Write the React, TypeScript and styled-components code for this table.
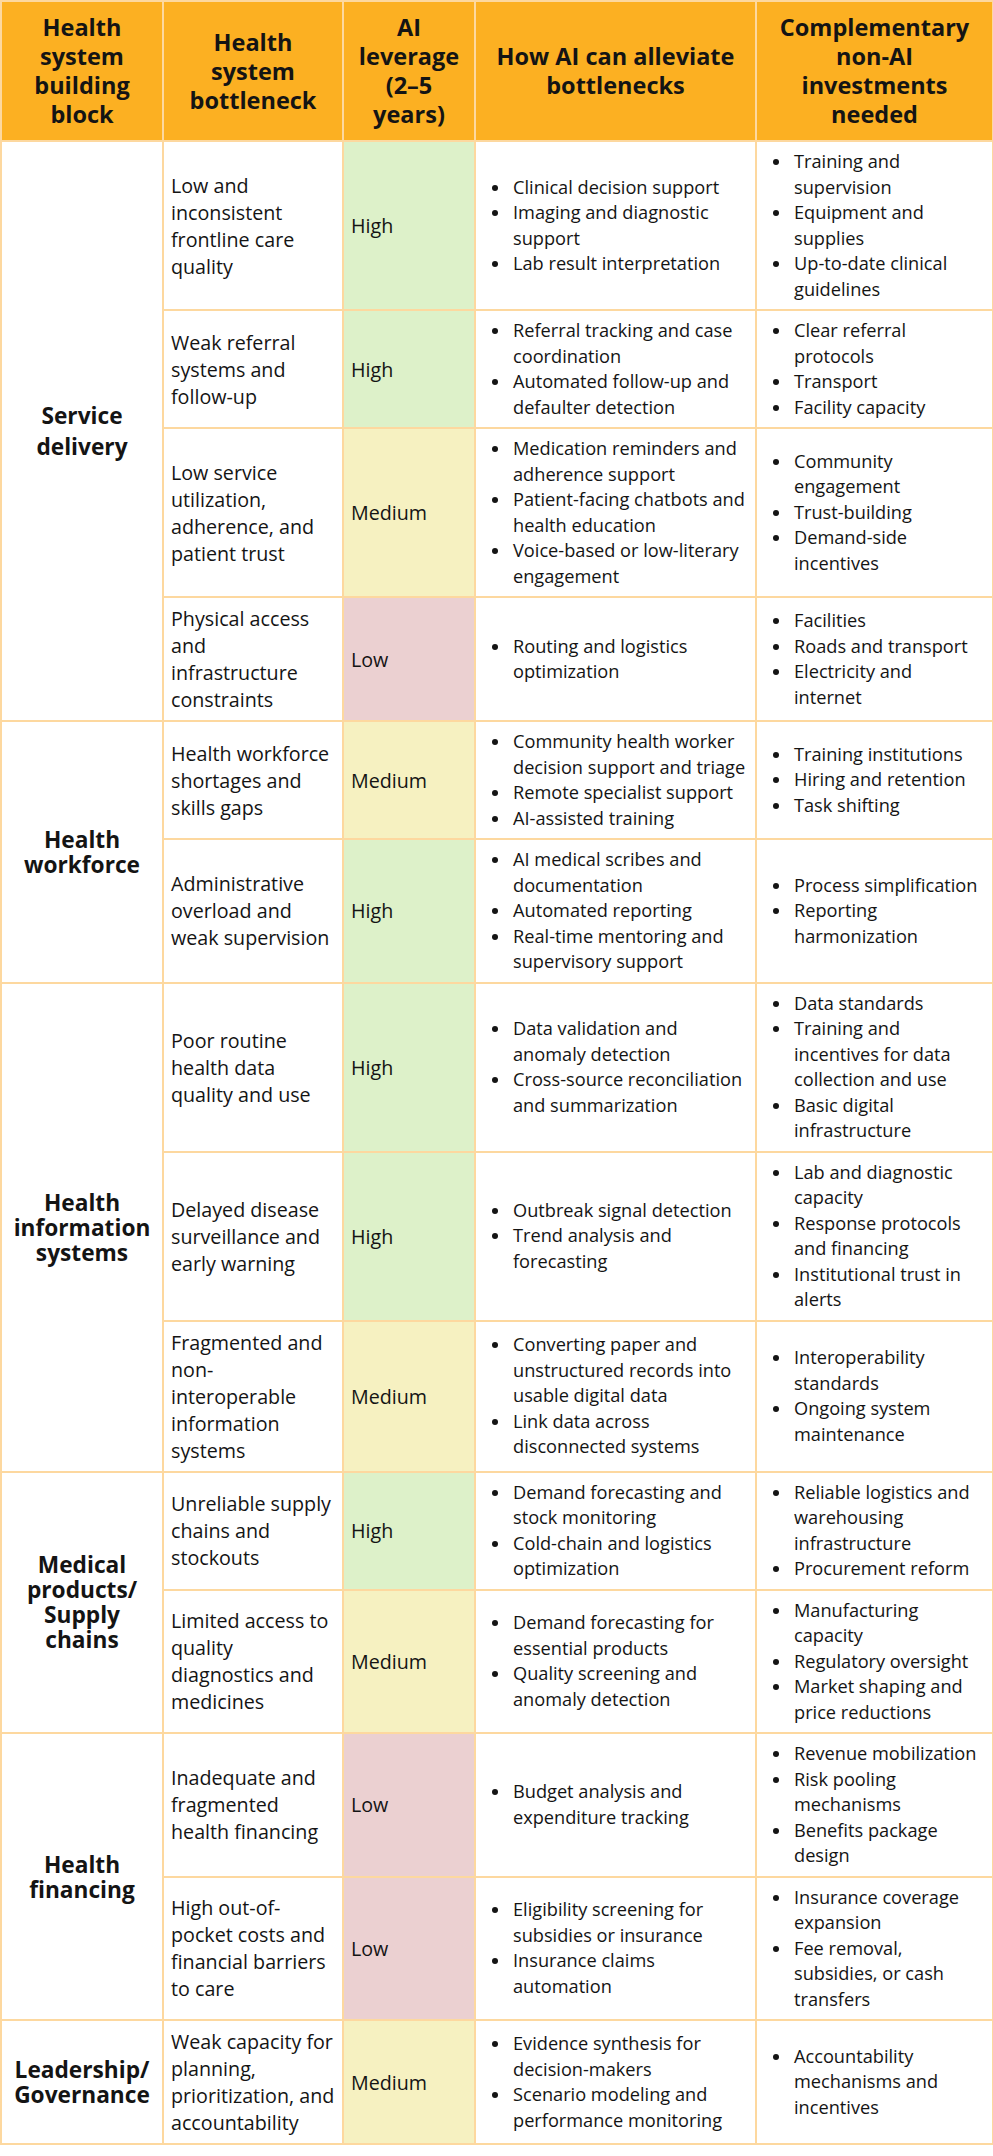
import React from 'react';
import styled, { createGlobalStyle } from 'styled-components';

type Level = 'High' | 'Medium' | 'Low';

interface IRow {
  bottleneck: string,
  level: Level,
  ai: string[],
  other: string[],
}

interface IGroup {
  name: string,
  spread?: boolean,
  rows: IRow[],
}

const COLORS = {
  header: '#fcb022',
  border: '#fdd89f',
  text: '#141414',
  High: '#ddf1c9',
  Medium: '#f6f1c1',
  Low: '#ebd0d1',
};

const GlobalStyle = createGlobalStyle`
  body {
    margin: 0;
    background: #ffffff;
    color: ${COLORS.text};
    font-family: "Open Sans", "Noto Sans", Lato, sans-serif;
  }
`;

const Table = styled.table`
  width: 992px;
  table-layout: fixed;
  border-collapse: collapse;
  border: 2px solid ${COLORS.border};
  font-size: 19.7px;
  line-height: 27px;
`;

const HeadCell = styled.th`
  background: ${COLORS.header};
  border: 2px solid ${COLORS.border};
  padding: 11px 8px;
  font-size: 23.5px;
  line-height: 29px;
  font-weight: 700;
  text-align: center;
  vertical-align: middle;
`;

const GroupCell = styled.td<{ $spread?: boolean }>`
  border: 2px solid ${COLORS.border};
  padding: 7px;
  font-size: 22.7px;
  line-height: ${(p) => (p.$spread ? '31px' : '25px')};
  font-weight: 700;
  text-align: center;
  vertical-align: middle;
`;

const TextCell = styled.td`
  border: 2px solid ${COLORS.border};
  padding: 7px;
  vertical-align: middle;
`;

const LevelCell = styled(TextCell)<{ $level: Level }>`
  background: ${(p) => COLORS[p.$level]};
`;

const ListCell = styled(TextCell)<{ $narrow?: boolean }>`
  padding-right: ${(p) => (p.$narrow ? '11px' : '7px')};
`;

const BulletList = styled.ul`
  list-style: none;
  margin: 0;
  padding: 0 0 0 30px;
  font-size: 18.2px;
  line-height: 25.5px;
`;

const Bullet = styled.li`
  position: relative;
  &::before {
    content: '';
    position: absolute;
    left: -21px;
    top: 10px;
    width: 6px;
    height: 6px;
    border-radius: 50%;
    background: ${COLORS.text};
  }
`;

const GROUPS: IGroup[] = [
  {
    name: 'Service delivery',
    spread: true,
    rows: [
      {
        bottleneck: 'Low and inconsistent frontline care quality',
        level: 'High',
        ai: ['Clinical decision support', 'Imaging and diagnostic support', 'Lab result interpretation'],
        other: ['Training and supervision', 'Equipment and supplies', 'Up-to-date clinical guidelines'],
      },
      {
        bottleneck: 'Weak referral systems and follow-up',
        level: 'High',
        ai: ['Referral tracking and case coordination', 'Automated follow-up and defaulter detection'],
        other: ['Clear referral protocols', 'Transport', 'Facility capacity'],
      },
      {
        bottleneck: 'Low service utilization, adherence, and patient trust',
        level: 'Medium',
        ai: ['Medication reminders and adherence support', 'Patient-facing chatbots and health education', 'Voice-based or low-literary engagement'],
        other: ['Community engagement', 'Trust-building', 'Demand-side incentives'],
      },
      {
        bottleneck: 'Physical access and infrastructure constraints',
        level: 'Low',
        ai: ['Routing and logistics optimization'],
        other: ['Facilities', 'Roads and transport', 'Electricity and internet'],
      },
    ],
  },
  {
    name: 'Health workforce',
    rows: [
      {
        bottleneck: 'Health workforce shortages and skills gaps',
        level: 'Medium',
        ai: ['Community health worker decision support and triage', 'Remote specialist support', 'AI-assisted training'],
        other: ['Training institutions', 'Hiring and retention', 'Task shifting'],
      },
      {
        bottleneck: 'Administrative overload and weak supervision',
        level: 'High',
        ai: ['AI medical scribes and documentation', 'Automated reporting', 'Real-time mentoring and supervisory support'],
        other: ['Process simplification', 'Reporting harmonization'],
      },
    ],
  },
  {
    name: 'Health information systems',
    rows: [
      {
        bottleneck: 'Poor routine health data quality and use',
        level: 'High',
        ai: ['Data validation and anomaly detection', 'Cross-source reconciliation and summarization'],
        other: ['Data standards', 'Training and incentives for data collection and use', 'Basic digital infrastructure'],
      },
      {
        bottleneck: 'Delayed disease surveillance and early warning',
        level: 'High',
        ai: ['Outbreak signal detection', 'Trend analysis and forecasting'],
        other: ['Lab and diagnostic capacity', 'Response protocols and financing', 'Institutional trust in alerts'],
      },
      {
        bottleneck: 'Fragmented and non-interoperable information systems',
        level: 'Medium',
        ai: ['Converting paper and unstructured records into usable digital data', 'Link data across disconnected systems'],
        other: ['Interoperability standards', 'Ongoing system maintenance'],
      },
    ],
  },
  {
    name: 'Medical products/ Supply chains',
    rows: [
      {
        bottleneck: 'Unreliable supply chains and stockouts',
        level: 'High',
        ai: ['Demand forecasting and stock monitoring', 'Cold-chain and logistics optimization'],
        other: ['Reliable logistics and warehousing infrastructure', 'Procurement reform'],
      },
      {
        bottleneck: 'Limited access to quality diagnostics and medicines',
        level: 'Medium',
        ai: ['Demand forecasting for essential products', 'Quality screening and anomaly detection'],
        other: ['Manufacturing capacity', 'Regulatory oversight', 'Market shaping and price reductions'],
      },
    ],
  },
  {
    name: 'Health financing',
    rows: [
      {
        bottleneck: 'Inadequate and fragmented health financing',
        level: 'Low',
        ai: ['Budget analysis and expenditure tracking'],
        other: ['Revenue mobilization', 'Risk pooling mechanisms', 'Benefits package design'],
      },
      {
        bottleneck: 'High out-of-pocket costs and financial barriers to care',
        level: 'Low',
        ai: ['Eligibility screening for subsidies or insurance', 'Insurance claims automation'],
        other: ['Insurance coverage expansion', 'Fee removal, subsidies, or cash transfers'],
      },
    ],
  },
  {
    name: 'Leadership/ Governance',
    rows: [
      {
        bottleneck: 'Weak capacity for planning, prioritization, and accountability',
        level: 'Medium',
        ai: ['Evidence synthesis for decision-makers', 'Scenario modeling and performance monitoring'],
        other: ['Accountability mechanisms and incentives'],
      },
    ],
  },
];

const HEADINGS = [
  'Health system building block',
  'Health system bottleneck',
  'AI leverage (2–5 years)',
  'How AI can alleviate bottlenecks',
  'Complementary non-AI investments needed',
];

const WIDTHS = [162, 180, 132, 281, 237];

const Items: React.FC<{ items: string[] }> = ({ items }) => (
  <BulletList>
    {items.map((item) => <Bullet key={item}>{item}</Bullet>)}
  </BulletList>
);

export default function App() {
  return (
    <>
      <GlobalStyle />
      <Table>
        <colgroup>
          {WIDTHS.map((w, i) => <col key={i} style={{ width: w }} />)}
        </colgroup>
        <thead>
          <tr>
            {HEADINGS.map((h) => <HeadCell key={h}>{h}</HeadCell>)}
          </tr>
        </thead>
        <tbody>
          {GROUPS.map((group) => group.rows.map((row, i) => (
            <tr key={row.bottleneck}>
              {i === 0 && (
                <GroupCell rowSpan={group.rows.length} $spread={group.spread}>
                  {group.name}
                </GroupCell>
              )}
              <TextCell>{row.bottleneck}</TextCell>
              <LevelCell $level={row.level}>{row.level}</LevelCell>
              <ListCell><Items items={row.ai} /></ListCell>
              <ListCell $narrow><Items items={row.other} /></ListCell>
            </tr>
          )))}
        </tbody>
      </Table>
    </>
  );
}
